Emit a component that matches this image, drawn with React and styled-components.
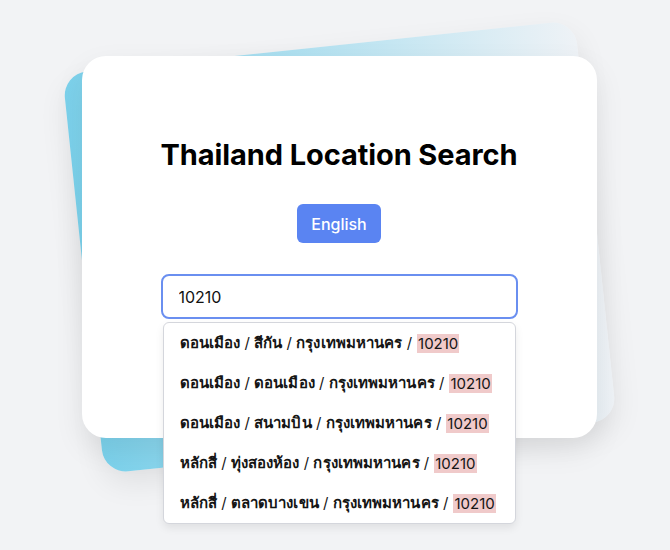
import React from 'react';
import styled, { createGlobalStyle } from 'styled-components';

const GlobalStyle = createGlobalStyle`
	body {
		margin: 0;
		background: #f2f3f5;
		font-family: Inter, "Noto Sans", sans-serif;
	}
`

const Page = styled.div`
	display: flex;
	justify-content: center;
	padding: 56px 0 0 8px;
	min-height: 550px;
	box-sizing: border-box;
`

const Card = styled.div`
	position: relative;
	width: 515px;
	height: 382px;
	box-sizing: border-box;
	padding-top: 82px;
	display: flex;
	flex-direction: column;
	align-items: center;
	background: #fff;
	border-radius: 24px;
	box-shadow: 0 12px 30px rgba(0, 0, 0, 0.08);

	&::before {
		content: '';
		position: absolute;
		inset: -10px 0;
		z-index: -1;
		border-radius: 24px;
		transform: rotate(-6deg);
		background: linear-gradient(to right, #7bd1eb, #eef2f6);
		box-shadow: 0 12px 30px rgba(0, 0, 0, 0.08);
	}
`

const Title = styled.h1`
	margin: 0;
	font-size: 29px;
	line-height: 34px;
	font-weight: 700;
	color: #000;
	letter-spacing: -0.1px;
`

const LangButton = styled.button`
	margin-top: 32px;
	width: 84px;
	height: 39px;
	border: none;
	border-radius: 6px;
	background: #5a84f2;
	color: #fff;
	font-family: Inter, sans-serif;
	font-size: 16px;
	font-weight: 500;
`

const SearchBox = styled.div`
	position: relative;
	margin-top: 31px;
	width: 357px;
`

const Input = styled.input`
	display: block;
	width: 100%;
	height: 45px;
	box-sizing: border-box;
	padding: 0 16px;
	border: 2px solid #6a8ff0;
	border-radius: 8px;
	font-family: Inter, sans-serif;
	font-size: 16px;
	color: #111;
	outline: none;
`

const Suggestions = styled.ul`
	position: absolute;
	top: 48px;
	left: 2px;
	right: 2px;
	margin: 0;
	padding: 0;
	list-style: none;
	background: #fff;
	border: 1px solid #d4d6dc;
	border-radius: 6px;
	box-shadow: 0 4px 8px rgba(0, 0, 0, 0.08);
	z-index: 2;
`

const Item = styled.li`
	height: 40px;
	display: flex;
	align-items: center;
	gap: 5px;
	padding: 0 16px;
	font-family: Inter, "Noto Sans", sans-serif;
	font-size: 15px;
	color: #151515;
	white-space: nowrap;
`

const Place = styled.span`
	font-weight: 600;
	letter-spacing: 0.1px;
`

const Sep = styled.span`
	font-weight: 400;
`

const Mark = styled.mark`
	background: #f0caca;
	color: #151515;
	font-weight: 400;
	padding: 0 1px;
`

const results = [
	['ดอนเมือง', 'สีกัน'],
	['ดอนเมือง', 'ดอนเมือง'],
	['ดอนเมือง', 'สนามบิน'],
	['หลักสี่', 'ทุ่งสองห้อง'],
	['หลักสี่', 'ตลาดบางเขน'],
]

const App = () => {
	return (
		<Page>
			<GlobalStyle />
			<Card>
				<Title>Thailand Location Search</Title>
				<LangButton>English</LangButton>
				<SearchBox>
					<Input defaultValue="10210" autoFocus />
					<Suggestions>
						{results.map(([district, sub]) => (
							<Item key={sub}>
								<span>
									<Place>{district}</Place><Sep> / </Sep>
									<Place>{sub}</Place><Sep> / </Sep>
									<Place>กรุงเทพมหานคร</Place><Sep> /</Sep>
								</span>
								<Mark>10210</Mark>
							</Item>
						))}
					</Suggestions>
				</SearchBox>
			</Card>
		</Page>
	)
}

export default App
